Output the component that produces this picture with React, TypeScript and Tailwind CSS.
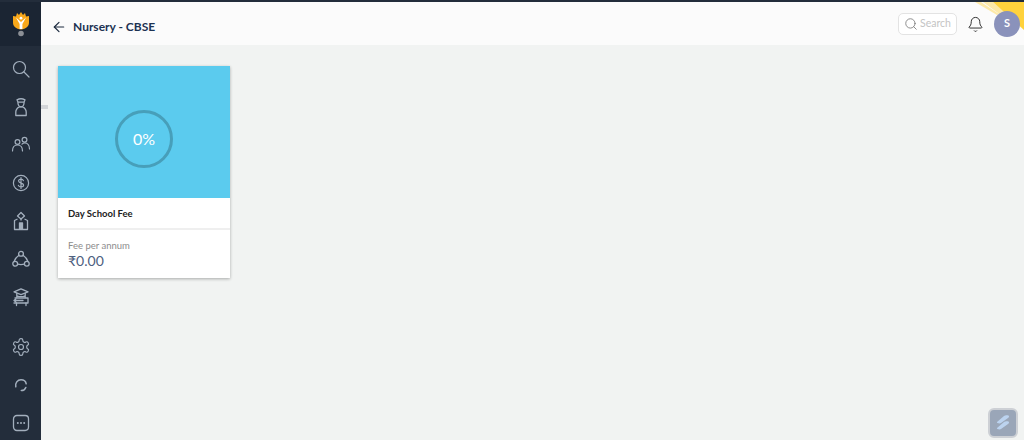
import * as React from 'react';
import { ArrowLeft, Bell, Search } from 'lucide-react';

const iconClass = 'w-[20px] h-[20px]';

// sidebar icons
function IconSearch() {
  return (
    <svg viewBox="0 0 20 20" className={iconClass} fill="none" stroke="#a3afbd" strokeWidth="1.2" strokeLinecap="round">
      <circle cx="8.5" cy="8.5" r="6" />
      <path d="M13 13l5 5" />
    </svg>
  );
}

function IconStudent() {
  return (
    <svg viewBox="0 0 20 20" className={iconClass} fill="none" stroke="#a3afbd" strokeWidth="1.3" strokeLinejoin="round">
      <path d="M6 2.800c2.500-1.300 5.500-1.300 8 0l-1 2.400H7z" />
      <path d="M7 5.200c-.3 2.700 1 4.600 3 4.600s3.300-1.900 3-4.600" />
      <path d="M4.800 18.500v-3.400c0-2.600 1.700-4.400 3.700-5.300h3c2 .9 3.700 2.700 3.700 5.300v3.400z" />
    </svg>
  );
}

function IconPeople() {
  return (
    <svg viewBox="0 0 20 20" className={iconClass} fill="none" stroke="#a3afbd" strokeWidth="1.2" strokeLinecap="round">
      <circle cx="6.500" cy="7" r="2.400" />
      <circle cx="13.500" cy="4.800" r="2.400" />
      <path d="M1.500 16c0-3.600 2-6 5-6s5 2.400 5 6" />
      <path d="M11 9.200c.7-.8 1.600-1.300 2.700-1.300 2.900 0 4.800 2.600 4.800 6.100" />
    </svg>
  );
}

function IconDollar() {
  return (
    <svg viewBox="0 0 20 20" className={iconClass} fill="none" stroke="#a3afbd" strokeWidth="1.200" strokeLinecap="round">
      <circle cx="10" cy="10" r="7.600" />
      <path d="M12.400 7.600c-.4-1-1.300-1.500-2.400-1.500-1.400 0-2.400.8-2.400 1.900 0 2.700 5 1.400 5 4.100 0 1.100-1.100 1.900-2.600 1.900-1.200 0-2.200-.6-2.600-1.600M10 4.600v10.800" />
    </svg>
  );
}

function IconSchool() {
  return (
    <svg viewBox="0 0 20 20" className={iconClass} fill="none" stroke="#a3afbd" strokeWidth="1.300" strokeLinejoin="round">
      <path d="M10 1.500l3.500 3.500-3.500 3-3.500-3z" />
      <path d="M6.500 8L3.500 9.500v9h13v-9L13.500 8" />
      <path d="M10 8v1.500" />
      <path d="M8.500 18.500v-6.500h3v6.500" fill="#a3afbd" />
    </svg>
  );
}

function IconGroup() {
  return (
    <svg viewBox="0 0 20 20" className={iconClass} fill="none" stroke="#a3afbd" strokeWidth="1.300">
      <circle cx="10" cy="4.800" r="2.400" />
      <circle cx="4.200" cy="14.800" r="2.400" />
      <circle cx="15.800" cy="14.800" r="2.400" />
      <path d="M8 6.200C5.800 7.600 3.800 10 3 12.600M12 6.200c2.200 1.400 4.200 3.800 5 6.400M6.600 15.200c2.200.6 4.600.6 6.800 0" />
    </svg>
  );
}

function IconCampus() {
  return (
    <svg viewBox="0 0 20 20" className={iconClass} fill="none" stroke="#a3afbd" strokeWidth="1.300" strokeLinejoin="round" strokeLinecap="round">
      <path d="M10 1.800l7 3-7 2.800-7-2.800z" />
      <path d="M5.800 6.400v4.200M14.200 6.400v4.200M5.800 8.800c2.800 1.200 5.600 1.200 8.400 0" />
      <path d="M4 11h13v5H3" />
      <path d="M3 13.500h9M3 13.500l1.800-1.600M3 13.500l1.800 1.600M5.500 16v2.500M15 16v2.500" />
    </svg>
  );
}

function IconGear() {
  return (
    <svg viewBox="0 0 24 24" className={iconClass} fill="none" stroke="#a3afbd" strokeWidth="1.400" strokeLinejoin="round">
      <path d="M12.220 2h-.44a2 2 0 0 0-2 2v.18a2 2 0 0 1-1 1.730l-.43.25a2 2 0 0 1-2 0l-.15-.08a2 2 0 0 0-2.730.73l-.22.38a2 2 0 0 0 .73 2.730l.15.1a2 2 0 0 1 1 1.720v.51a2 2 0 0 1-1 1.740l-.15.09a2 2 0 0 0-.73 2.730l.22.38a2 2 0 0 0 2.730.73l.15-.08a2 2 0 0 1 2 0l.43.25a2 2 0 0 1 1 1.730V20a2 2 0 0 0 2 2h.44a2 2 0 0 0 2-2v-.18a2 2 0 0 1 1-1.730l.43-.25a2 2 0 0 1 2 0l.15.08a2 2 0 0 0 2.730-.73l.22-.39a2 2 0 0 0-.73-2.730l-.15-.08a2 2 0 0 1-1-1.740v-.5a2 2 0 0 1 1-1.740l.15-.09a2 2 0 0 0 .73-2.730l-.22-.38a2 2 0 0 0-2.730-.73l-.15.08a2 2 0 0 1-2 0l-.43-.25a2 2 0 0 1-1-1.730V4a2 2 0 0 0-2-2z" />
      <circle cx="12" cy="12" r="3" />
    </svg>
  );
}

// broken ring, two arcs
function IconSync() {
  return (
    <svg viewBox="0 0 20 20" className={iconClass} fill="none" stroke="#a3afbd" strokeWidth="1.500" strokeLinecap="round">
      <path d="M4.800 11.800C3.900 8 6.500 4.800 10 4.800c2.800 0 4.800 1.800 5.200 4" />
      <path d="M14.800 12.500c-.7 2-2.400 3.100-4.500 3.100" />
    </svg>
  );
}

function IconChat() {
  return (
    <svg viewBox="0 0 20 20" className={iconClass} fill="none" stroke="#a3afbd" strokeWidth="1.300">
      <rect x="2.500" y="2.500" width="15" height="15" rx="3.400" />
      <circle cx="6.800" cy="10" r="1" fill="#a3afbd" stroke="none" />
      <circle cx="10" cy="10" r="1" fill="#a3afbd" stroke="none" />
      <circle cx="13.200" cy="10" r="1" fill="#a3afbd" stroke="none" />
    </svg>
  );
}

function Logo() {
  return (
    <svg viewBox="0 0 18 26" className="w-[18px] h-[26px]">
      <path d="M1 5l3 .5L5 2l2 2 2-3 2 3 2-2 1 3.500L17 5v6.500c0 4-3 6.500-8 7-5-.5-8-3-8-7z" fill="#f9a81a" />
      <path d="M4 6.500l5 4.500 5-4.500-3.600 6.500v5H7.600v-5z" fill="#fff" />
      <circle cx="9" cy="7.200" r="1.400" fill="#fff" />
      <circle cx="9" cy="22.500" r="2.800" fill="#8b8f95" />
    </svg>
  );
}

const topIcons = [IconSearch, IconStudent, IconPeople, IconDollar, IconSchool, IconGroup, IconCampus];
const bottomIcons = [IconGear, IconSync, IconChat];

export default function App() {
  return (
    <div className="relative w-[1024px] h-[440px] overflow-hidden flex flex-col bg-[#f1f3f2] font-['Lato',sans-serif]">
      <div className="h-[2px] shrink-0 bg-[#232d3b]" />
      <div className="flex flex-1 min-h-0">
        {/* sidebar */}
        <aside className="w-[41px] shrink-0 flex flex-col items-center bg-[#232d3b]">
          <div className="w-full h-[44px] shrink-0 flex items-center justify-center bg-[#1b2533]">
            <Logo />
          </div>
          <div className="flex flex-col items-center gap-[18px] mt-[13px]">
            {topIcons.map((Icon, i) => (
              <Icon key={i} />
            ))}
          </div>
          <div className="flex flex-col items-center gap-[18px] mt-auto mb-[7px]">
            {bottomIcons.map((Icon, i) => (
              <Icon key={i} />
            ))}
          </div>
        </aside>

        <main className="flex-1 min-w-0 flex flex-col">
          {/* header */}
          <header className="h-[43px] shrink-0 flex items-center bg-[#fbfbfb] pl-[10px] pr-[4px]">
            <div className="flex items-center mt-[7px]">
              <ArrowLeft className="w-[16px] h-[16px] text-[#1c2a3f]" strokeWidth={1.8} />
              <h1 className="ml-[6px] text-[12px] font-bold text-[#1c3252]">Nursery - CBSE</h1>
            </div>
            <div className="relative z-10 ml-auto flex items-center">
              <div className="w-[59px] h-[22px] flex items-center gap-[2px] pl-[5px] rounded-[5px] border border-[#e3e3e3] bg-white">
                <Search className="w-[14px] h-[14px] text-[#777]" strokeWidth={1.4} />
                <span className="text-[10.5px] text-[#c4c4c4]">Search</span>
              </div>
              <Bell className="ml-[10px] mt-[2px] w-[17px] h-[17px] text-[#222]" strokeWidth={1.3} />
              <div className="ml-[10px] w-[26px] h-[26px] rounded-full bg-[#8a92bb] flex items-center justify-center text-[11px] font-bold text-white">
                S
              </div>
            </div>
          </header>

          {/* content */}
          <div className="flex-1 min-h-0 pt-[21px] pl-[17px]">
            <div className="w-[172px] bg-white shadow-[0_1px_3px_rgba(0,0,0,0.3)]">
              <div className="h-[132px] flex items-center justify-center pt-[14px] bg-[#5bcbee]">
                <div className="w-[58px] h-[58px] rounded-full border-[3px] border-[#479fba] flex items-center justify-center text-[16px] text-white">
                  0%
                </div>
              </div>
              <div className="h-[32px] flex items-center pt-[2px] px-[10px] border-b-2 border-[#efefef]">
                <span className="text-[9.5px] font-bold text-[#222]">Day School Fee</span>
              </div>
              <div className="h-[48px] px-[10px] pt-[10px]">
                <div className="text-[9.5px] leading-[12px] text-[#8d8d8d]">Fee per annum</div>
                <div className="text-[14px] leading-[17px] text-[#4d6080]">₹0.00</div>
              </div>
            </div>
          </div>
        </main>
      </div>

      {/* corner ribbon */}
      <svg viewBox="0 0 50 30" className="absolute top-[2px] right-0 w-[50px] h-[30px]">
        <path d="M1 0h6l18 12-2 1z" fill="#fde9a8" />
        <path d="M9 0h10l14 12-5 2z" fill="#fde9a8" />
        <path d="M19 0h31v28z" fill="#ffd23c" />
      </svg>

      {/* drag handle */}
      <div className="absolute left-[41px] top-[105px] w-[7px] h-[4px] bg-[#d2d5d8]" />

      {/* floating widget */}
      <div className="absolute left-[988px] top-[408px] w-[30px] h-[30px] rounded-[6px] bg-[#9aa6b8] border-2 border-[#cdd0d5] flex items-center justify-center">
        <svg viewBox="0 0 20 20" className="w-[20px] h-[20px]">
          <path d="M4 9l7-6c1-1 5-1 5 0s0 1-1 2l-7 5c-1 1-5 0-4-1z" fill="#bcd3ef" />
          <path d="M4 15l7-6c1-1 5-1 5 0s0 1-1 2l-7 5c-1 1-5 0-4-1z" fill="#bcd3ef" />
        </svg>
      </div>
    </div>
  );
}
